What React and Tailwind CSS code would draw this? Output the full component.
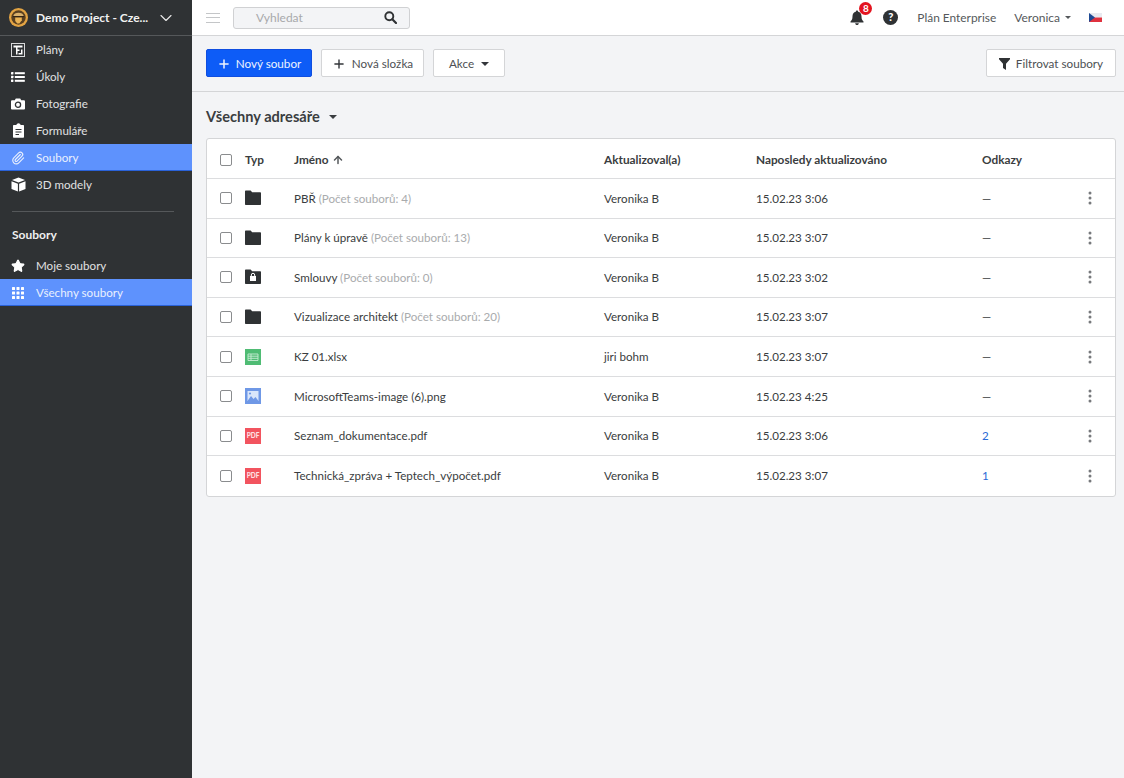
import React from 'react';
import { Plus, Star, Paperclip, ArrowUp, ChevronDown } from 'lucide-react';

const FILES = [
  { name: 'PBŘ', count: 'Počet souborů: 4', type: 'folder', by: 'Veronika B', at: '15.02.23 3:06', links: '—' },
  { name: 'Plány k úpravě', count: 'Počet souborů: 13', type: 'folder', by: 'Veronika B', at: '15.02.23 3:07', links: '—' },
  { name: 'Smlouvy', count: 'Počet souborů: 0', type: 'locked', by: 'Veronika B', at: '15.02.23 3:02', links: '—' },
  { name: 'Vizualizace architekt', count: 'Počet souborů: 20', type: 'folder', by: 'Veronika B', at: '15.02.23 3:07', links: '—' },
  { name: 'KZ 01.xlsx', type: 'xlsx', by: 'jiri bohm', at: '15.02.23 3:07', links: '—' },
  { name: 'MicrosoftTeams-image (6).png', type: 'image', by: 'Veronika B', at: '15.02.23 4:25', links: '—' },
  { name: 'Seznam_dokumentace.pdf', type: 'pdf', by: 'Veronika B', at: '15.02.23 3:06', links: '2' },
  { name: 'Technická_zpráva + Teptech_výpočet.pdf', type: 'pdf', by: 'Veronika B', at: '15.02.23 3:07', links: '1' },
];

function PlanIcon() {
  return (
    <svg width="14" height="14" viewBox="0 0 14 14">
      <rect x="0.5" y="0.5" width="13" height="13" fill="#2f3234" stroke="#d8d9da" />
      <path fill="#fff" d="M2.5 2.5h9v2h-5v2h2v1.500h-2v3.500h-1.500v-7h-2.500zM10 6.500h1.500v5h-4v-1.500H10z" />
    </svg>
  );
}

function ListIcon() {
  return (
    <svg width="14" height="12" viewBox="0 0 14 12" fill="#fff">
      <rect x="0" y="1" width="2.4" height="2.4" rx="0.4" />
      <rect x="0" y="4.8" width="2.4" height="2.4" rx="0.4" />
      <rect x="0" y="8.6" width="2.4" height="2.4" rx="0.4" />
      <rect x="3.8" y="1.2" width="10" height="2" />
      <rect x="3.8" y="5" width="10" height="2" />
      <rect x="3.8" y="8.8" width="10" height="2" />
    </svg>
  );
}

function CameraIcon() {
  return (
    <svg width="14" height="12" viewBox="0 0 14 12">
      <path fill="#fff" d="M1.200 2.200h2.600L4.800.4h4.400l1 1.800h2.600c.6 0 1.200.5 1.200 1.200v7c0 .7-.6 1.200-1.200 1.200H1.200C.6 11.600 0 11.100 0 10.400v-7c0-.7.6-1.200 1.200-1.200z" />
      <circle cx="7" cy="6.8" r="2.6" fill="none" stroke="#2f3234" strokeWidth="1.3" />
    </svg>
  );
}

function FormIcon() {
  return (
    <svg width="11" height="15" viewBox="0 0 11 15">
      <path fill="#fff" d="M1 2h2.400C3.600.9 4.500.2 5.500.2S7.400.9 7.600 2H10c.6 0 1 .4 1 1v10.800c0 .6-.4 1-1 1H1c-.6 0-1-.4-1-1V3c0-.6.4-1 1-1z" />
      <path stroke="#2f3234" strokeWidth="1" d="M2.500 6.500h6M2.500 9h6M2.500 11.500h3.500" />
    </svg>
  );
}

function GridIcon() {
  return (
    <svg width="12" height="12" viewBox="0 0 12 12" fill="#fff">
      {[0, 4.5, 9].map((y) => [0, 4.5, 9].map((x) => <rect key={`${x}-${y}`} x={x} y={y} width="3" height="3" rx="0.5" />))}
    </svg>
  );
}

function CubeIcon() {
  return (
    <svg width="15" height="15" viewBox="0 0 15 15" fill="#fff">
      <path d="M7.500 0.500 14 3 7.500 5.600 1 3zM0.500 4.200l6.400 2.500V14.500L0.500 12zM14.500 4.200 8.100 6.700v7.800L14.500 12z" />
    </svg>
  );
}

function SearchIcon() {
  return (
    <svg width="13" height="13" viewBox="0 0 13 13" fill="none" stroke="#2f3234" strokeWidth="1.900">
      <circle cx="5.300" cy="5.300" r="4" />
      <path d="M8.300 8.300 12 12" strokeLinecap="round" strokeWidth="2.200" />
    </svg>
  );
}

function BellIcon() {
  return (
    <svg width="14" height="15" viewBox="0 0 14 15" fill="#2f3234">
      <path d="M7 0.500c.7 0 1.200.5 1.200 1.200C10.300 2.200 11.500 3.900 11.500 6.200c0 3 .7 4 2 5.300v1H.5v-1c1.300-1.300 2-2.300 2-5.300C2.500 3.900 3.700 2.200 5.800 1.700 5.800 1 6.300.5 7 .5z" />
      <path d="M5.200 13.200h3.600C8.800 14.200 8 15 7 15s-1.800-.8-1.800-1.800z" />
    </svg>
  );
}

function FunnelIcon() {
  return (
    <svg width="11" height="12" viewBox="0 0 11 12" fill="#2f3234">
      <path d="M0 0h11v1.300L7 5.800V12L4 10V5.800L0 1.300z" />
    </svg>
  );
}

function KebabIcon() {
  return (
    <svg width="4" height="14" viewBox="0 0 4 14" fill="#77797c">
      <circle cx="2" cy="2" r="1.500" />
      <circle cx="2" cy="7" r="1.500" />
      <circle cx="2" cy="12" r="1.500" />
    </svg>
  );
}

function Logo() {
  return (
    <svg width="19" height="19" viewBox="0 0 19 19">
      <circle cx="9.500" cy="9.500" r="9.500" fill="#e3a443" />
      <circle cx="9.500" cy="9.500" r="7.200" fill="#5a4020" />
      <path d="M4.300 8.200C4.500 3.600 14.500 3.600 14.700 8.200z" fill="#d9b06c" />
      <path d="M3.800 8.100h11.400v1H3.800z" fill="#2c2013" />
      <path d="M6.200 9.500h6.600v2.700l-2.400 3.300H8.200L6.200 13z" fill="#eab355" />
    </svg>
  );
}

function NavItem({ icon, label, active }) {
  return (
    <div className={`flex h-[27px] items-center ${active ? 'bg-[#5e92fd] shadow-[inset_0_-1px_0_#2a62d8]' : ''}`}>
      <span className="flex w-[36px] justify-center">{icon}</span>
      <span className={`text-[11.6px] ${active ? 'text-[#e9f0fe]' : 'text-[#e0e1e2]'}`}>{label}</span>
    </div>
  );
}

function Sidebar() {
  return (
    <aside className="flex w-[192px] shrink-0 flex-col bg-[#2f3234]">
      <div className="flex h-[36px] items-center border-b border-[#55585a] pl-[9px]">
        <Logo />
        <span className="ml-[8px] w-[115px] text-[12px] font-bold whitespace-nowrap text-[#f2f2f2]">Demo Project - Cze...</span>
        <ChevronDown size={20} strokeWidth={1.4} className="ml-[5px] text-[#e6e6e6]" />
      </div>
      <NavItem icon={<PlanIcon />} label="Plány" />
      <NavItem icon={<ListIcon />} label="Úkoly" />
      <NavItem icon={<CameraIcon />} label="Fotografie" />
      <NavItem icon={<FormIcon />} label="Formuláře" />
      <NavItem active icon={<Paperclip size={14} strokeWidth={2} color="#e8effd" />} label="Soubory" />
      <NavItem icon={<CubeIcon />} label="3D modely" />
      <div className="mx-[12px] mt-[13px] h-px w-[162px] bg-[#55585a]" />
      <div className="mt-[15px] mb-[9px] pl-[12px] text-[12px] leading-[16px] font-bold text-[#f0f0f0]">Soubory</div>
      <NavItem icon={<Star size={14} fill="#fff" color="#fff" />} label="Moje soubory" />
      <NavItem active icon={<GridIcon />} label="Všechny soubory" />
    </aside>
  );
}

function TopBar() {
  return (
    <header className="flex h-[36px] shrink-0 items-center border-b border-[#d4d5d7] bg-white pl-[14px]">
      <div className="flex h-[10px] w-[14px] flex-col justify-between">
        <span className="h-px bg-[#c4c6c8]" />
        <span className="h-px bg-[#c4c6c8]" />
        <span className="h-px bg-[#c4c6c8]" />
      </div>
      <div className="ml-[13px] flex h-[22px] w-[177px] items-center justify-between rounded-[3px] border border-[#d0d1d3] bg-[#f3f4f6] pr-[12px] pl-[22px]">
        <span className="text-[12px] text-[#a8a9ab]">Vyhledat</span>
        <SearchIcon />
      </div>
      <div className="ml-auto flex items-center">
        <div className="relative flex">
          <BellIcon />
          <span className="absolute top-[-8px] left-[9px] flex h-[13px] w-[13px] items-center justify-center rounded-full bg-[#e3141f] text-[10px] font-bold text-white">8</span>
        </div>
        <span className="ml-[19px] flex h-[15px] w-[15px] items-center justify-center rounded-full bg-[#2f3234] text-[11px] font-black text-white">?</span>
        <span className="ml-[19px] text-[11.9px] text-[#55585b]">Plán Enterprise</span>
        <span className="ml-[18px] text-[12px] text-[#55585b]">Veronica</span>
        <span className="ml-[5px] h-0 w-0 border-x-[3px] border-t-[3px] border-x-transparent border-t-[#55585b]" />
        <svg width="13" height="9" viewBox="0 0 13 9" className="mr-[22px] ml-[18px]">
          <rect width="13" height="4.500" fill="#e8eaf0" />
          <rect y="4.500" width="13" height="4.500" fill="#e0323e" />
          <path d="M0 0 6 4.500 0 9z" fill="#1f4a94" />
        </svg>
      </div>
    </header>
  );
}

function ActionButton({ children, className }) {
  return (
    <button className={`flex h-[28px] items-center justify-center rounded-[2px] border border-[#d4d5d7] bg-white pt-[2px] text-[11.7px] text-[#4d5053] ${className}`}>
      {children}
    </button>
  );
}

function Toolbar() {
  return (
    <div className="flex h-[56px] shrink-0 items-center border-b border-[#d4d5d7] pr-[8px] pb-[2px] pl-[14px]">
      <button className="flex h-[28px] w-[106px] items-center justify-center gap-[5px] rounded-[2px] border border-[#0f4ee0] bg-[#0d5cf7] pt-[2px] text-[11.7px] text-[#eef3fe]">
        <Plus size={14} strokeWidth={2.6} />
        Nový soubor
      </button>
      <ActionButton className="ml-[9px] w-[103px] gap-[6px]">
        <Plus size={14} strokeWidth={2.4} color="#33363a" />
        Nová složka
      </ActionButton>
      <ActionButton className="ml-[9px] w-[72px] gap-[7px]">
        Akce
        <span className="h-0 w-0 border-x-[4.5px] border-t-[4.5px] border-x-transparent border-t-[#33363a]" />
      </ActionButton>
      <ActionButton className="ml-auto w-[130px] gap-[6px]">
        <FunnelIcon />
        Filtrovat soubory
      </ActionButton>
    </div>
  );
}

function TypeIcon({ type }) {
  if (type === 'folder' || type === 'locked') {
    return (
      <svg width="16" height="16" viewBox="0 0 16 16">
        <path fill="#2f3234" d="M0 1.500C0 .9.4.5 1 .5h4.600l1.600 1.800H15c.6 0 1 .4 1 1V14c0 .6-.4 1-1 1H1c-.6 0-1-.4-1-1z" />
        {type === 'locked' && (
          <>
            <rect x="5" y="7" width="6" height="5" fill="#fff" />
            <path d="M6.300 7.500V6a1.700 1.700 0 0 1 3.400 0v1.500" fill="none" stroke="#fff" />
          </>
        )}
      </svg>
    );
  }
  if (type === 'xlsx') {
    return (
      <svg width="16" height="16" viewBox="0 0 16 16">
        <rect width="16" height="16" fill="#4fbc74" />
        <path d="M3 5h10v6.500H3zM3 7.200h10M3 9.300h10M6 5v6.500" fill="none" stroke="#c8ecd5" strokeWidth="0.9" />
      </svg>
    );
  }
  if (type === 'image') {
    return (
      <svg width="16" height="16" viewBox="0 0 16 16">
        <rect width="16" height="16" fill="#6f98e6" />
        <rect x="2.500" y="3" width="11" height="10" fill="#d9e6fb" />
        <circle cx="5" cy="5.500" r="1.100" fill="#6f98e6" />
        <path d="M2.500 13 6 8l2.500 3 2-2 3 4z" fill="#6f98e6" />
      </svg>
    );
  }
  return (
    <span className="flex h-[16px] w-[16px] items-center justify-center bg-[#f2545f] text-[6.5px] font-black text-[#fde1e3]">PDF</span>
  );
}

function Checkbox() {
  return <span className="block h-[12px] w-[12px] rounded-[2px] border border-[#8a8c8e] bg-white" />;
}

function FileRow({ file, last }) {
  return (
    <div className={`flex h-[39.6px] items-center text-[11.6px] text-[#3a3d40] ${last ? '' : 'border-b border-[#dcdddf]'}`}>
      <span className="ml-[13px] w-[25px]"><Checkbox /></span>
      <span className="flex w-[49px] items-center"><TypeIcon type={file.type} /></span>
      <span className="w-[310px]">
        {file.name}
        {file.count && <span className="text-[#a9abad]"> ({file.count})</span>}
      </span>
      <span className="w-[152px]">{file.by}</span>
      <span className="w-[226px]">{file.at}</span>
      <span className={`w-[106px] ${file.links === '—' ? '' : 'text-[#2a6bd6]'}`}>{file.links}</span>
      <KebabIcon />
    </div>
  );
}

function FileTable() {
  return (
    <div className="mr-[8px] ml-[14px] rounded-[3px] border border-[#d4d5d7] bg-white">
      <div className="flex h-[40px] items-center border-b border-[#dcdddf] pt-[2px] text-[11.8px] font-bold text-[#3a3d40]">
        <span className="ml-[13px] w-[25px]"><Checkbox /></span>
        <span className="w-[49px]">Typ</span>
        <span className="flex w-[310px] items-center gap-[3px]">
          Jméno
          <ArrowUp size={12} strokeWidth={3} color="#55585b" />
        </span>
        <span className="w-[152px]">Aktualizoval(a)</span>
        <span className="w-[226px]">Naposledy aktualizováno</span>
        <span>Odkazy</span>
      </div>
      {FILES.map((file, i) => (
        <FileRow key={file.name} file={file} last={i === FILES.length - 1} />
      ))}
    </div>
  );
}

export default function App() {
  return (
    <div className="flex h-[778px] overflow-hidden bg-[#f3f4f6] font-['Lato',sans-serif]">
      <Sidebar />
      <main className="flex min-w-0 flex-1 flex-col">
        <TopBar />
        <Toolbar />
        <div className="flex items-center pt-[15px] pb-[11px] pl-[14px]">
          <span className="text-[14.6px] leading-[20px] font-bold text-[#3a3d40]">Všechny adresáře</span>
          <span className="ml-[9px] h-0 w-0 border-x-[4.5px] border-t-[4.5px] border-x-transparent border-t-[#3a3d40]" />
        </div>
        <FileTable />
      </main>
    </div>
  );
}
